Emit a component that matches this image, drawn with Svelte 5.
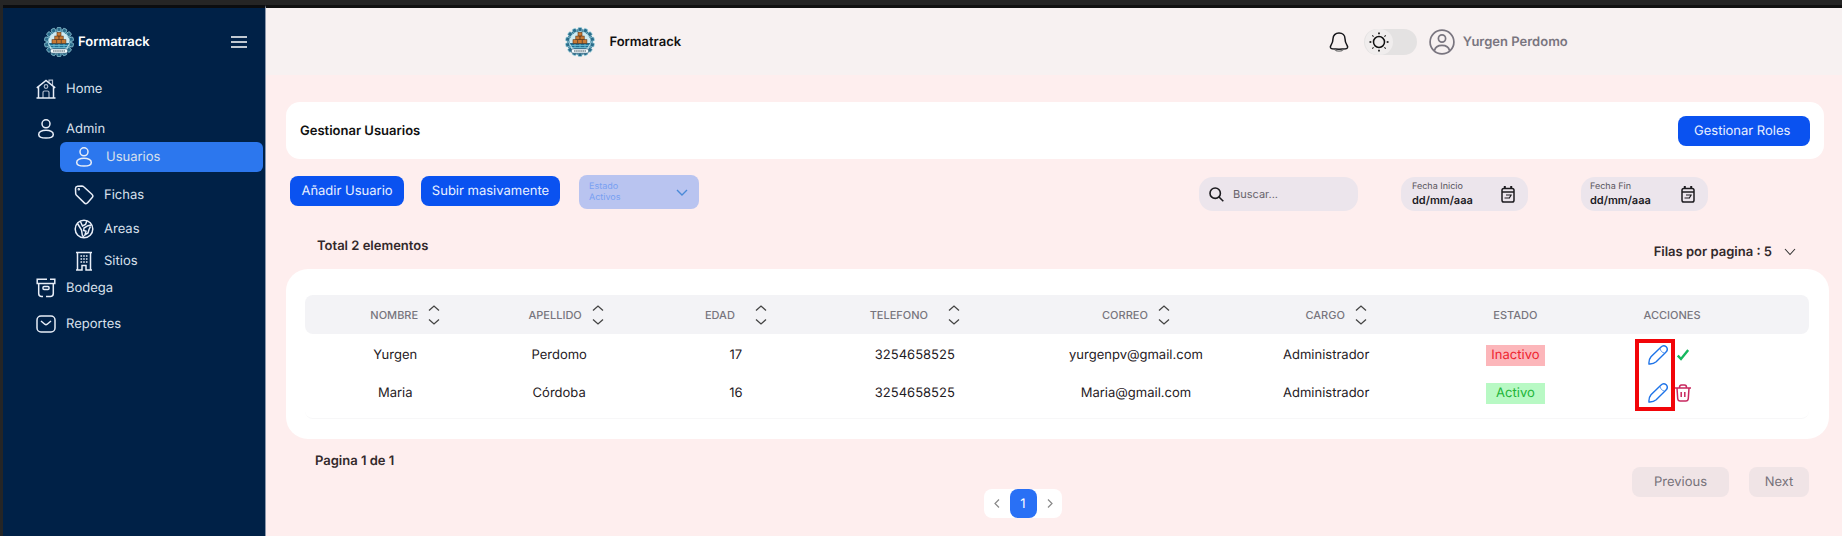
<script>
  const cols = [
    { label: 'NOMBRE', sort: true },
    { label: 'APELLIDO', sort: true },
    { label: 'EDAD', sort: true, wide: true },
    { label: 'TELEFONO', sort: true, wide: true },
    { label: 'CORREO', sort: true },
    { label: 'CARGO', sort: true },
    { label: 'ESTADO' },
    { label: 'ACCIONES' }
  ];
  const users = [
    { nombre: 'Yurgen', apellido: 'Perdomo', edad: 17, tel: '3254658525', correo: 'yurgenpv@gmail.com', cargo: 'Administrador', activo: false },
    { nombre: 'Maria', apellido: 'Córdoba', edad: 16, tel: '3254658525', correo: 'Maria@gmail.com', cargo: 'Administrador', activo: true }
  ];
  const teeth = Array.from({ length: 14 }, (_, i) => i * (360 / 14));
  const rays = [0, 45, 90, 135, 180, 225, 270, 315];
</script>

{#snippet logo()}
  <svg class="logo" viewBox="0 0 30 30" aria-hidden="true">
    <circle cx="15" cy="15" r="13" fill="#1d5f80" />
    {#each teeth as a}
      <rect x="13" y="0.4" width="4" height="4" rx="1" fill="#2b6c8b" stroke="#a5dbe6" stroke-width="0.7" transform={`rotate(${a} 15 15)`} />
    {/each}
    <circle cx="15" cy="15" r="10.6" fill="#cdeaf2" />
    <path d="M4.8 16h20.4a10.6 10.6 0 0 1-20.4 0z" fill="#236d92" />
    <g fill="#c97a34" stroke="#5e3312" stroke-width="0.6">
      <rect x="13" y="5.5" width="4" height="3.6" />
      <rect x="10.8" y="9.1" width="4" height="3.6" /><rect x="15.2" y="9.1" width="4" height="3.6" />
      <rect x="8" y="12.7" width="4.3" height="3.6" /><rect x="12.8" y="12.7" width="4.3" height="3.6" /><rect x="17.6" y="12.7" width="4.3" height="3.6" />
    </g>
    <path d="M6 18.5h18M8 20.5h14M10 17v4M15 17v4M20 17v4" stroke="#6fc0d6" stroke-width="0.8" />
    <rect x="6.5" y="21.8" width="17" height="4.4" rx="1.4" fill="#f4fbfd" stroke="#1c4d68" stroke-width="0.6" />
    <path d="M9 24h12" stroke="#3d4f5a" stroke-width="1" stroke-dasharray="1.6 0.5" />
  </svg>
{/snippet}

{#snippet person()}
  <svg width="20" height="20" viewBox="0 0 20 20" class="ico" aria-hidden="true"><circle cx="10" cy="4.8" r="4" /><path d="M10 11.2c4.300 0 7.300 1.900 7.300 4.200 0 2.200-2.500 3.600-7.300 3.600s-7.300-1.400-7.300-3.600c0-2.300 3-4.200 7.300-4.200z" /></svg>
{/snippet}

{#snippet calendar()}
  <svg width="14" height="17" viewBox="0 0 14 17" fill="none" stroke="#1c1b1f" stroke-width="1.500" aria-hidden="true"><rect x="1" y="2.500" width="12" height="13.500" rx="1.800" /><path d="M1 6h12" /><path d="M3.800 0v3M10.200 0v3" stroke-width="2" /><path d="M5 9h5.500M3.500 12h5M10.500 8.500L8 12.500" stroke-width="1.200" /></svg>
{/snippet}

<div class="app">
  <aside>
    <div class="brand">
      {@render logo()}
      <strong>Formatrack</strong>
      <button class="menu" aria-label="Menú"><svg width="16" height="12" viewBox="0 0 16 12" stroke="#fff" stroke-width="1.500"><path d="M0 1h16M0 6h16M0 11h16" /></svg></button>
    </div>
    <nav>
      <a href="#home" class="top home">
        <svg width="20" height="20" viewBox="0 0 20 20" class="ico" aria-hidden="true"><path d="M0.500 19h19M2.500 19V8M17.500 19V8M0.800 8.800L10 1.500l9.200 7.300" /><path d="M13 3V1.200h3.500V6M7 19v-5.500c0-1 .5-1.500 1.500-1.500h3c1 0 1.500.5 1.500 1.500V19" opacity=".75" stroke-width="1.200" /><circle cx="10" cy="7.500" r="1.800" opacity=".75" stroke-width="1.200" /></svg>
        Home
      </a>
      <a href="#admin" class="top admin">{@render person()}Admin</a>
      <a href="#usuarios" class="sub active">{@render person()}Usuarios</a>
      <a href="#fichas" class="sub fichas">
        <svg width="20" height="20" viewBox="0 0 20 20" class="ico" aria-hidden="true"><path d="M1.500 3.500c0-1.500.7-2 2-2.200l4.300-.4c.8 0 1.300.2 1.900.8l8.200 7.600c1.300 1.200 1.300 2.200.3 3.300l-4.600 5.200c-1 1.100-2.200 1.200-3.300.1L2.500 10.300c-.6-.6-.8-1.100-.8-1.900z" /><circle cx="4.800" cy="4.300" r=".5" /></svg>
        Fichas
      </a>
      <a href="#areas" class="sub areas">
        <svg width="20" height="20" viewBox="0 0 20 20" class="ico" aria-hidden="true"><circle cx="10" cy="10" r="8.800" /><path d="M3.500 4.500L7.500 11l.8 5 1.500 2.500M6.300 2.200L8.500 7l3-1.500L13 1.800M17.500 6l-3.500.7-4 2.300-.3 2.500 2.300.8-1 3.500 3-1.800 1-3.500 1.500-3" /></svg>
        Areas
      </a>
      <a href="#sitios" class="sub sitios">
        <svg width="20" height="20" viewBox="0 0 20 20" class="ico" aria-hidden="true"><path d="M2 1.500h16M3.500 1.500V19M16.500 1.500V19M2 19h6v-4.500h4V19h6" /><path d="M6.500 5h7M6.500 8h7M6.500 11h7" stroke-dasharray="1.600 1.100" /></svg>
        Sitios
      </a>
      <a href="#bodega" class="top bodega">
        <svg width="20" height="20" viewBox="0 0 20 20" class="ico" aria-hidden="true"><path d="M11 1.200H1.200v4.300h17.600V1.200H14M2.700 5.500v10c0 2 .8 3 3 3H7M17.300 5.500v10c0 2-.8 3-3 3H10" /><rect x="7" y="8.500" width="6" height="3" rx="1" /></svg>
        Bodega
      </a>
      <a href="#reportes" class="top reportes">
        <svg width="20" height="20" viewBox="0 0 20 20" class="ico" aria-hidden="true"><rect x="1" y="2" width="18" height="16" rx="4" /><path d="M5 7l3.800 3.200c.8.600 1.600.6 2.400 0L15 7" /></svg>
        Reportes
      </a>
    </nav>
  </aside>

  <div class="page">
    <header>
      <div class="hbrand">{@render logo()}<strong>Formatrack</strong></div>
      <div class="account">
        <button aria-label="Notificaciones"><svg width="20" height="20" viewBox="0 0 20 20" fill="none" stroke="#16161a" stroke-width="1.500"><path d="M10 1c3.500 0 6 2.400 6 5.800 0 3.600.7 4.600 2.100 6.700 1.200 1.900.3 3-1.400 3.300-4.400.6-9 .6-13.400 0-1.700-.3-2.600-1.400-1.400-3.300C3.300 11.400 4 10.400 4 6.800 4 3.400 6.500 1 10 1z" /><path d="M6 17.800c2 1.800 6 1.800 8 0" stroke="#777" stroke-width="1.300" /></svg></button>
        <button class="toggle" aria-label="Cambiar tema">
          <span><svg width="20" height="20" viewBox="0 0 20 20" fill="none" stroke="#111" aria-hidden="true"><circle cx="10" cy="10" r="5.500" stroke-width="1.500" />{#each rays as r}<path d="M10 .5v1.800" stroke-width={r % 90 ? 1 : 1.700} transform={`rotate(${r} 10 10)`} />{/each}</svg></span>
        </button>
        <svg class="avatar" width="26" height="26" viewBox="0 0 26 26" fill="none" stroke="#79757f" stroke-width="1.700" aria-hidden="true"><circle cx="13" cy="13" r="11.900" /><circle cx="13" cy="9.500" r="3.600" /><path d="M5.500 21.500c.8-3.800 3.500-5.200 7.500-5.200s6.700 1.400 7.500 5.200" /></svg>
        <strong>Yurgen Perdomo</strong>
      </div>
    </header>

    <main>
      <section class="title">
        <h1>Gestionar Usuarios</h1>
        <button class="btn roles">Gestionar Roles</button>
      </section>

      <div class="tools">
        <button class="btn add">Añadir Usuario</button>
        <button class="btn bulk">Subir masivamente</button>
        <div class="state">
          <label for="estado">Estado</label>
          <select id="estado"><option>Activos</option></select>
          <svg width="12" height="7" viewBox="0 0 12 7" aria-hidden="true"><path d="M1 1l5 5 5-5" /></svg>
        </div>
        <label class="field search">
          <svg width="15" height="15" viewBox="0 0 15 15" fill="none" stroke="#1c1b1f" stroke-width="1.600" aria-hidden="true"><circle cx="6.200" cy="6.200" r="5.200" /><path d="M10 10l4.300 4.300" /></svg>
          <input type="text" placeholder="Buscar..." aria-label="Buscar" />
        </label>
        <div class="field date">
          <div><label for="inicio">Fecha Inicio</label><input id="inicio" type="text" value="dd/mm/aaa" /></div>
          {@render calendar()}
        </div>
        <div class="field date last">
          <div><label for="fin">Fecha Fin</label><input id="fin" type="text" value="dd/mm/aaa" /></div>
          {@render calendar()}
        </div>
      </div>

      <div class="summary">
        <strong>Total 2 elementos</strong>
        <button>Filas por pagina : 5<svg width="12" height="8" viewBox="0 0 12 8" fill="none" stroke="#333" stroke-width="1.100" aria-hidden="true"><path d="M1 1l5 5.500L11 1" /></svg></button>
      </div>

      <section class="card">
        <div class="frame">
          <table>
            <colgroup>{#each cols as c}<col />{/each}</colgroup>
            <thead>
              <tr>
                {#each cols as c}
                  <th scope="col"><span class:wide={c.wide}>{c.label}{#if c.sort}<svg width="12" height="20" viewBox="0 0 12 20" fill="none" stroke="#444" stroke-width="1.300" aria-hidden="true"><path d="M1 5.500l5-4.500 5 4.500M1 14.500l5 4.500 5-4.500" /></svg>{/if}</span></th>
                {/each}
              </tr>
            </thead>
            <tbody>
              {#each users as u, i}
                <tr>
                  <td>{u.nombre}</td>
                  <td>{u.apellido}</td>
                  <td>{u.edad}</td>
                  <td>{u.tel}</td>
                  <td>{u.correo}</td>
                  <td>{u.cargo}</td>
                  <td><span class="badge" class:on={u.activo}>{u.activo ? 'Activo' : 'Inactivo'}</span></td>
                  <td>
                    <div class="actions">
                      <button aria-label="Editar"><svg width="20" height="20" viewBox="0 0 20 20" fill="none" stroke="#1f74e8" stroke-width="1.400"><path d="M1 19c-.3-2.800.2-5 2-7.200L12.800 2.200c1.600-1.600 4-1.600 5.400-.4 1.300 1.500 1.300 3.800-.4 5.400L8.200 16.800C6 18.700 3.800 19.200 1 19z" /><path d="M12 3.500c.6 2.500 2 4 4.300 4.500" stroke-width="1" opacity=".7" /></svg></button>
                      {#if u.activo}
                        <button aria-label="Eliminar"><svg width="16" height="18" viewBox="0 0 16 18" fill="none" stroke="#c8285f" stroke-width="1.500"><path d="M0 4h16M4.500 3.500C4.500 1.800 5 1 6.500 1h3c1.500 0 2 .8 2 2.500M2 4l.7 10.500c.2 1.800.8 2.500 2.500 2.500h5.600c1.700 0 2.300-.7 2.500-2.500L14 4M6.200 8v5M9.800 8v5" /></svg></button>
                      {:else}
                        <button class="check" aria-label="Activar"><svg width="12" height="12" viewBox="0 0 12 12" fill="none" stroke="#16b85f" stroke-width="2.400"><path d="M.8 6.500L4 10 11.200 1" /></svg></button>
                      {/if}
                      {#if i === 0}<i class="mark"></i>{/if}
                    </div>
                  </td>
                </tr>
              {/each}
            </tbody>
          </table>
        </div>
      </section>

      <footer>
        <strong>Pagina 1 de 1</strong>
        <div class="pager">
          <button aria-label="Anterior"><svg width="6" height="9" viewBox="0 0 6 9"><path d="M5 .5l-4 4 4 4" /></svg></button>
          <button class="current">1</button>
          <button aria-label="Siguiente"><svg width="6" height="9" viewBox="0 0 6 9"><path d="M1 .5l4 4-4 4" /></svg></button>
        </div>
        <div class="steps"><button class="prev">Previous</button><button class="next">Next</button></div>
      </footer>
    </main>
  </div>
</div>

<style>
  :global(body) { background: #feeeee; }
  .app, .app * { box-sizing: border-box; }
  .app {
    display: flex;
    min-height: 100vh;
    border-top: 5px solid #252525;
    border-left: 3px solid #252525;
    font-family: Inter, "Liberation Sans", sans-serif;
    font-size: 13px;
    line-height: 16px;
    text-rendering: geometricPrecision;
    color: #1f2024;
  }
  button { font: inherit; color: inherit; text-rendering: inherit; border: 0; padding: 0; background: none; cursor: pointer; }
  input, select { font: inherit; text-rendering: inherit; border: 0; padding: 0; background: none; outline: none; }
  svg { display: block; flex: none; }
  strong { font-weight: 600; }
  .logo { width: 30px; height: 30px; }
  .ico { fill: none; stroke: #e8eef8; stroke-width: 1.5; }

  aside { flex: none; width: 263px; background: #002147; border-top: 3px solid #0b0d10; border-right: 1px solid #8d97ab; }
  .brand { display: flex; align-items: center; gap: 4px; padding: 19px 18px 0 41px; color: #fff; }
  .menu { margin-left: auto; }
  nav { display: flex; flex-direction: column; padding-top: 19px; }
  nav a { display: flex; align-items: center; height: 26px; color: #d9e0ec; text-decoration: none; }
  .top { gap: 10px; padding-left: 33px; }
  .sub { gap: 10px; padding-left: 71px; }
  .admin { margin-top: 14px; }
  nav .active { height: 30px; margin: 0 2px 0 57px; padding-left: 14px; gap: 12px; border-radius: 6px; background: #2c77ee; }
  .fichas { margin-top: 10px; }
  .areas { margin-top: 8px; }
  .sitios { margin-top: 6px; }
  .bodega { margin-top: 1px; }
  .reportes { margin-top: 10px; }

  .page { flex: 1; min-width: 0; border-top: 3px solid #111; }
  header { display: flex; justify-content: space-between; align-items: center; height: 67px; padding: 0 17.4% 0 19%; background: #f7f1f1; }
  .hbrand { display: flex; align-items: center; gap: 14px; color: #111; }
  .account { display: flex; align-items: center; color: #79757f; }
  .toggle { width: 53px; height: 26px; margin: 0 12px 0 15px; padding: 0; border-radius: 13px; background: #e4e2e2; }
  .toggle span { display: grid; place-items: center; width: 28px; height: 26px; margin-left: 1px; border-radius: 13px; background: #f0eded; }
  .avatar { margin-right: 8px; }

  main { padding: 27px 13px 0 20px; background: #feeeee; }
  .title { display: flex; align-items: center; justify-content: space-between; height: 57px; margin-right: 5px; padding: 0 14px; border-radius: 14px; background: #fff; }
  h1 { margin: 0; font-size: 13px; font-weight: 600; color: #111; }
  .btn { height: 30px; border-radius: 8px; background: #0a52f0; color: #e9f0ff; white-space: nowrap; }
  .roles { width: 132px; padding: 0 16px; text-align: left; }
  .tools { display: flex; align-items: flex-start; margin-top: 16px; padding: 0 121px 0 4px; height: 36px; }
  .tools .btn { margin-top: 1px; }
  .add { width: 114px; }
  .bulk { width: 139px; margin: 0 19px 0 17px; }
  .state { display: grid; grid-template-columns: 1fr 12px; align-items: center; align-content: center; width: 120px; height: 34px; padding: 0 11px 0 10px; border-radius: 8px; background: #b9c4f0; color: #78a0f2; font-size: 9px; line-height: 11px; }
  .state label { grid-area: 1 / 1; }
  .state select { grid-area: 2 / 1; appearance: none; color: inherit; }
  .state svg { grid-area: 1 / 2 / 3 / 3; fill: none; stroke: #4a8ad8; stroke-width: 1.4; }
  .field { display: flex; align-items: center; height: 34px; margin-top: 2px; border-radius: 14px; background: #ece5ec; }
  .search { width: 159px; margin-left: auto; padding: 0 10px; gap: 9px; }
  .search input { flex: 1; min-width: 0; font-size: 11px; }
  .search input::placeholder { color: #67636b; opacity: 1; }
  .date { width: 127px; margin-left: 43px; padding: 0 13px 0 11px; justify-content: space-between; }
  .date.last { margin-left: 53px; padding-left: 9px; }
  .date div { display: flex; flex-direction: column; min-width: 0; }
  .date label { font-size: 9px; line-height: 12px; color: #57535b; }
  .date input { width: 72px; font-size: 11px; line-height: 15px; height: 15px; font-weight: 600; color: #1c1b1f; }

  .summary { display: flex; justify-content: space-between; margin-top: 27px; padding: 0 33px 0 31px; color: #33292b; }
  .summary button { display: flex; align-items: center; gap: 12px; margin-top: 6px; font-weight: 600; }
  .card { margin-top: 9px; padding: 26px 20px 20px 19px; border-radius: 22px; background: #fff; }
  .frame { padding-bottom: 8px; border-bottom: 1px solid #f7f7f8; border-radius: 8px; }
  table { width: 100%; table-layout: fixed; border-collapse: separate; border-spacing: 0; }
  col:nth-child(1) { width: 12%; }
  col:nth-child(2) { width: 9.8%; }
  col:nth-child(3) { width: 13.7%; }
  col:nth-child(4) { width: 10.1%; }
  col:nth-child(5) { width: 19.3%; }
  col:nth-child(6) { width: 6%; }
  col:nth-child(7) { width: 18.1%; }
  th, td { padding: 0; text-align: center; white-space: nowrap; }
  th { height: 39px; background: #f3f3f6; color: #77757d; font-size: 11px; font-weight: 500; }
  th:first-child { padding-left: 20px; border-radius: 8px 0 0 8px; }
  th:last-child { border-radius: 0 8px 8px 0; }
  th:nth-child(2) { padding-left: 14px; }
  th:nth-child(6) { padding-left: 20px; }
  th:nth-child(7), td:nth-child(7) { padding-left: 16px; }
  th:last-child, td:last-child { text-align: left; }
  th span { display: inline-flex; align-items: center; gap: 10px; vertical-align: middle; }
  th .wide { gap: 20px; }
  td { height: 38px; padding-top: 4px; }
  .badge { display: inline-block; width: 59px; height: 21px; line-height: 20px; vertical-align: middle; background: #fcb6ba; color: #ee2430; }
  .badge.on { background: #b8f9c4; color: #23b539; }
  .actions { position: relative; display: flex; align-items: center; gap: 7px; padding-left: 4px; }
  .check { margin-left: 2px; }
  .mark { position: absolute; left: -9px; top: -6px; width: 40px; height: 72px; border: 4px solid #f20509; pointer-events: none; }

  footer { display: grid; grid-template-columns: 669fr 78px 747fr; align-items: start; padding: 14px 20px 14px 29px; color: #33292b; }
  .pager { display: flex; justify-content: space-between; height: 29px; margin-top: 36px; border-radius: 8px; background: #fff; }
  .pager button { display: grid; place-items: center; width: 25px; }
  .pager svg { fill: none; stroke: #888; stroke-width: 1.2; }
  .pager .current { width: 27px; border-radius: 8px; background: #2970f5; color: #fff; }
  .steps { display: flex; justify-content: flex-end; gap: 20px; margin-top: 14px; color: #77727a; }
  .steps button { height: 30px; border-radius: 8px; background: #f0e4e6; }
  .prev { width: 97px; }
  .next { width: 60px; }
</style>
